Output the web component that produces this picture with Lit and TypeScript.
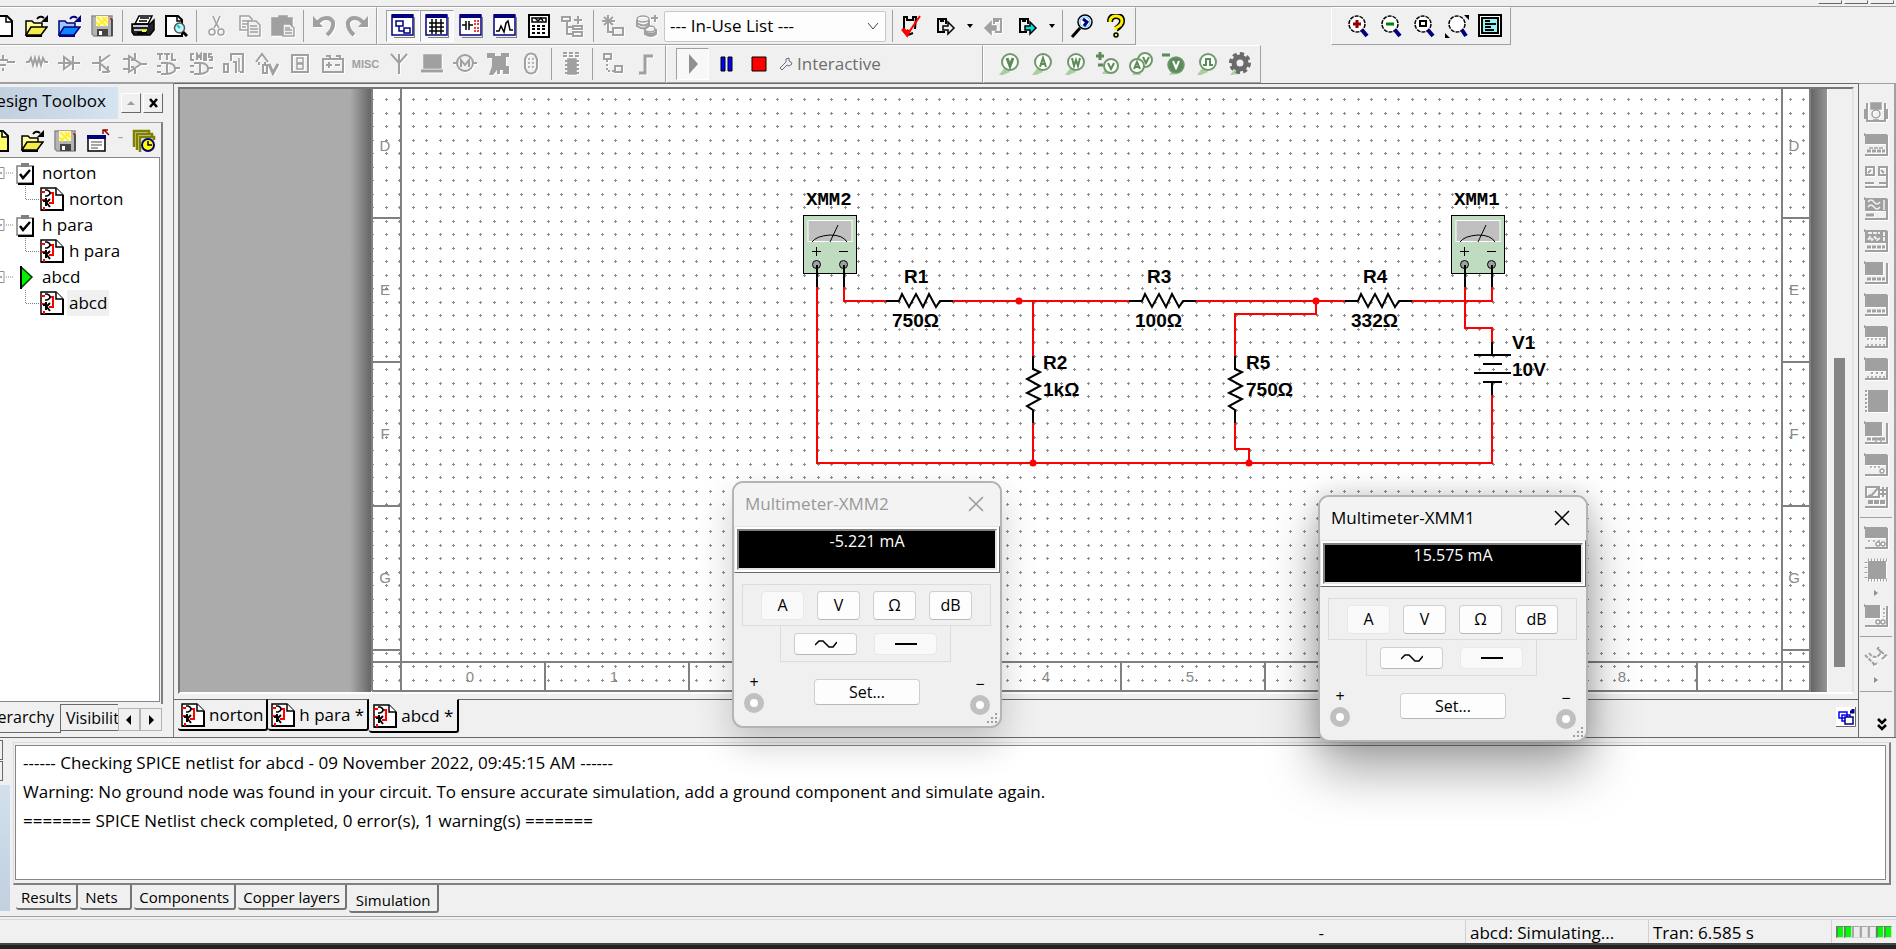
import { LitElement, html, css, svg, nothing, TemplateResult } from "lit";
import { customElement, property } from "lit/decorators.js";
import { classMap } from "lit/directives/class-map.js";

type Glyph = TemplateResult;
const glyph = (body: unknown, w = 24, h = 24) =>
  html`<svg width=${w} height=${h} viewBox="0 0 ${w} ${h}" aria-hidden="true">${body}</svg>`;

/* ---------- main toolbar glyphs ---------- */
const folder = (back: string, front: string, line: string) => svg`
  <path d="M13 5q3-4 7-1" stroke=${line} stroke-width="2"/><path d="M24 1v7h-7z" fill=${line} stroke="none"/>
  <path d="M2 21V7h6l2 2h8v4" fill=${back} stroke=${line}/><path d="M2 21l5-8h16l-6 8z" fill=${front} stroke=${line}/>
  <path d="M2 22h16" stroke=${line} stroke-width="2"/>`;
const G = {
  page: svg`<path d="M3 2h13l5 5v15H3z" fill="#fff" stroke="#000" stroke-width="2"/><path d="M15 2v6h6" stroke="#000"/>`,
  pageStar: svg`<path d="M2 2h14l5 5v15H2z" fill="#ffff6a" stroke="#000" stroke-width="2"/><path d="M15 2v6h5" fill="#fff" stroke="#000"/>`,
  open: folder("#ffff9a", "#f4ec4a", "#000"),
  openBlue: folder("#9cc8ff", "#0a84ff", "#00007e"),
  save: svg`<path d="M2 2h20v20H4l-2-2z" fill="#b4b4b4" stroke="#8c8c8c"/><path d="M6 2h12v10H6z" fill="#fffbd0" stroke="none"/><path d="M7 3l9 9M12 3l6 6M6 8l4 4M17 3l-9 9" stroke="#ffee2a" stroke-width="2"/><path d="M7 15h11v7H7z" fill="#444" stroke="none"/><path d="M9 17h3v4H9z" fill="#fff" stroke="none"/><path d="M22 5v17" stroke="#000" stroke-width="1"/><path d="M20 5h2" stroke="#f00"/>`,
  print: svg`<path d="M8 2h13l-4 8H4z" fill="#fff" stroke="#000"/><path d="M9 4h9M8 7h8" stroke="#000"/><path d="M1 10h18l4-4v10l-4 5H3l-2-3z" fill="#222" stroke="#000"/><path d="M2 12h15M3 16h13" stroke="#fff"/><path d="M6 19h10" stroke="#000" stroke-width="2"/><path d="M11 17h4" stroke="#ff0" stroke-width="2"/>`,
  preview: svg`<path d="M2 2h12l4 4v16H2z" fill="#fff" stroke="#000" stroke-width="2"/><path d="M13 2v5h5" stroke="#000"/><circle cx="15.500" cy="14" r="5" fill="#c4f4f8" stroke="#555"/><path d="M13 11l3 3" stroke="#0cc" stroke-width="2"/><path d="M19 18l4 4" stroke="#000" stroke-width="3"/>`,
  cut: svg`<path d="M8 2l3 7 3 5M15 2l-3 7-3 5"/><circle cx="7" cy="18" r="3"/><circle cx="16" cy="18" r="3"/>`,
  copy: svg`<path d="M2 2h9l3 3v11H2z"/><path d="M4 7h7M4 10h7M4 13h4"/><path d="M10 7h8l4 4v11H10z" fill="#f0f0f0"/><path d="M12 12h7M12 15h8M12 18h8"/>`,
  paste: svg`<path d="M1 4h7V2h8v2h5v17H1z" fill="currentColor"/><path d="M12 10h7l4 4v8H12z" fill="#f0f0f0"/><path d="M14 14h5M14 16h7M14 19h7"/>`,
  undo: svg`<path d="M1 2v11h10z" fill="currentColor" stroke="none"/><path d="M5 9l5-4q8-3 11 3 1 7-6 13" stroke-width="4"/>`,
  redo: svg`<path d="M23 2v11H13z" fill="currentColor" stroke="none"/><path d="M19 9l-5-4q-8-3-11 3-1 7 6 13" stroke-width="4"/>`,
  frame: (inner: unknown) => svg`<path d="M24 3v21H3" stroke="#808080" stroke-width="2"/><path d="M1 1h21v20H1z" fill="#fff" stroke="#00007e"/><path d="M1 2h21" stroke="#00007e" stroke-width="4"/>${inner}`,
  zoom: (inner: unknown) => svg`<circle cx="11" cy="10" r="8" fill="#fff" stroke="#000" stroke-width="1.500" stroke-dasharray="4 1"/><path d="M16 16l5 6" stroke="#00007e" stroke-width="4"/>${inner}`,
};
const calc = svg`<path d="M2 1h20v22H2z" fill="#fff" stroke="#000" stroke-width="2"/><path d="M5 4h14v4H5z" fill="#fff" stroke="#000"/><path d="M8 4l3 3 3-3 2 3" stroke="#000"/><path d="M5 12h14M5 15h14M5 19h14" stroke="#000" stroke-width="2" stroke-dasharray="3 2"/>`;
const hier = svg`<path d="M1 3h8v4H1zM12 12h9v3h-9zM12 18h9v4h-9z" stroke-width="2"/><path d="M6 8v12h6M6 13h6M13 6h8M17 2v8" stroke-width="2"/>`;
const star = svg`<path d="M1 7h13M7 1v12M3 3l9 8M12 3l-9 8M12 14h10v7H12zM7 13v5h4" stroke-width="2"/>`;
const dbs = svg`<ellipse cx="8" cy="5" rx="6" ry="3"/><path d="M2 6v6q7 5 12 0V6M2 9q7 5 12 0" stroke-width="2"/><ellipse cx="15" cy="15" rx="5" ry="3"/><path d="M10 15v5q6 4 11 0v-5M10 18q6 4 11 0M16 4h7M20 1v7" stroke-width="2"/>`;
const chipArrow = (fill: string, c: string) => svg`<path d="M4 4v14h7M4 5h3v2h2V5h3v5" stroke=${c} stroke-width="2"/><path d="M9 12h5V8l6 6-6 6v-4H9z" fill=${fill} stroke=${c}/>`;

interface Tool { name: string; icon?: Glyph; kind?: "sep" | "drop" | "list" | "gap"; dim?: boolean; on?: boolean; }
const sep: Tool = { name: "", kind: "sep" };
const drop = (name: string): Tool => ({ name, kind: "drop" });
const t = (name: string, body: unknown, o: Partial<Tool> = {}): Tool => ({ name, icon: glyph(body), ...o });
const d = (name: string, body: unknown) => t(name, body, { dim: true });

const fileTools: Tool[] = [
  t("New", G.page), t("Open", G.open), t("Open samples", G.openBlue), t("Save", G.save), sep,
  t("Print", G.print), t("Print preview", G.preview), sep,
  d("Cut", G.cut), d("Copy", G.copy), d("Paste", G.paste), sep, d("Undo", G.undo), d("Redo", G.redo),
];
const viewTools: Tool[] = [
  t("Design Toolbox", G.frame(svg`<path d="M5 7h7v5H5zM13 14h6v5h-6zM8 12v5h5" stroke="#00007e" fill="#fff"/>`), { on: true }),
  t("Spreadsheet View", G.frame(svg`<path d="M4 9h15M4 13h15M4 17h15M7 5v15M11 5v15M16 5v15" stroke="#000"/>`), { on: true }),
  t("SPICE Netlist", G.frame(svg`<path d="M3 11h4M7 7v9M10 7v9M10 11h4" stroke="#000"/><path d="M15 7h5M15 10h5M15 14h5M15 17h5" stroke="#e00000" stroke-dasharray="2 1"/>`)),
  t("Grapher", G.frame(svg`<path d="M3 17h3l2-5 3 6 2-9 2-2 2 9h3" stroke="#000"/>`)),
  t("Postprocessor", calc), d("Parent sheet", hier), sep, d("Component Wizard", star), d("Database Manager", dbs),
  { name: "In-Use List", kind: "list" }, sep,
  t("Electrical rules check", svg`<path d="M4 15V3h3v3h6V3h3l-1 12M8 21l5-2" stroke="#000" stroke-width="2"/><path d="M2 15l5 6L20 2" stroke="#f00" stroke-width="2"/><path d="M3 15l4 5 2-4" stroke="#f00" stroke-width="4"/>`),
  t("Transfer to Ultiboard", chipArrow("#f0f0f0", "#000")), drop("Transfer options"),
  d("Backward annotate", svg`<path d="M19 4v14h-6M19 5h-3v2h-2V5h-2v5" stroke-width="2"/><path d="M14 12H9V8l-6 6 6 6v-4h5z" fill="currentColor"/>`),
  t("Forward annotate", chipArrow("#00e0e0", "#000")), drop("Annotate options"), sep,
  t("Find examples", svg`<circle cx="15" cy="8" r="7" fill="#fff" stroke="#000"/><circle cx="15" cy="8" r="5" stroke="#8fd6ff"/><path d="M13 5l4 3-3 4" stroke="#00007e" stroke-width="3"/><path d="M10 14l-8 9" stroke="#000" stroke-width="3"/>`),
  t("Help", svg`<path d="M6 8q0-6 6-6t6 5q0 4-6 8" stroke="#000" stroke-width="6"/><path d="M6 8q0-6 6-6t6 5q0 4-6 7v2" stroke="#fff200" stroke-width="3"/><circle cx="12" cy="21" r="2" fill="#fff200" stroke="#000"/>`),
];
const zoomTools: Tool[] = [
  t("Zoom in", G.zoom(svg`<path d="M7 10h8M11 6v8" stroke="#900000" stroke-width="3"/>`)),
  t("Zoom out", G.zoom(svg`<path d="M7 10h8" stroke="#008000" stroke-width="3"/>`)),
  t("Zoom area", G.zoom(svg`<path d="M8 7h6v5H8z" stroke="#000" stroke-width="2"/>`)),
  t("Zoom sheet", svg`<circle cx="12" cy="10" r="8" fill="#fff" stroke="#000" stroke-dasharray="4 1"/><path d="M17 16l4 6" stroke="#00007e" stroke-width="4"/><path d="M19 1h5v5zM0 24v-5l5 5z" fill="#000" stroke="none"/>`),
  t("Full screen", svg`<path d="M1 1h22v21H1z" fill="#fff" stroke="#000" stroke-width="2"/><path d="M4 4h16v15H4z" fill="#8ff4f4" stroke="#000" stroke-width="2"/><path d="M7 7h5M7 10h11M7 13h6M7 16h9" stroke="#000" stroke-width="2"/>`),
];

/* ---------- component glyphs ---------- */
const gate = svg`<path d="M5 11h6v11H5M1 14h4M1 20h4M11 11q7 0 8 5t-8 6M19 16h5" stroke-width="2"/>`;
const partTools: Tool[] = [
  d("Source", svg`<path d="M0 10h8M16 10h8M6 8h11M9 13h6M12 3v5M12 16v3" stroke-width="2"/>`),
  d("Basic", svg`<path d="M2 10h3l2-4 2 7 2-7 2 7 2-7 2 7 2-7 2 4h3" stroke-width="2"/>`),
  d("Diode", svg`<path d="M1 11h22M7 5v12l8-6zM16 4v14" stroke-width="2"/>`),
  d("Transistor", svg`<path d="M2 11h8M10 4v15M10 10l10-7M11 12l9 8M18 14v6h-6" stroke-width="2"/>`),
  d("Analog", svg`<path d="M6 4v16l12-8zM0 7h6M0 17h6M18 12h6M12 1v6M12 17v5M8 8h3M8 15h3" stroke-width="2"/>`),
  d("TTL", svg`${gate}<path d="M1 2h6M4 2v6M8 2h6M11 2v6M16 1v7h4" stroke-width="2"/>`),
  d("CMOS", svg`${gate}<path d="M5 2H2v6h3M8 8V2l2 3 2-3v6M15 2h2v6h-2zM23 2h-3v3h3v3h-3" stroke-width="2"/>`),
  d("Misc digital", svg`<path d="M9 9V2h12v18h-3M2 12h4v8H2zM11 10h3v11" stroke-width="2"/><path d="M17 6v14"/>`),
  d("Mixed", svg`<path d="M1 10l6-8 6 8M4 10v3M10 10v3M8 13h4v8H8z" stroke-width="2"/><path d="M14 12l4 9 5-9" stroke-width="3"/>`),
  d("Indicator", svg`<path d="M4 3h16v17H4z" stroke-width="2"/><path d="M9 6h6v5H9zM9 12h6v5H9z"/>`),
  d("Power", svg`<path d="M2 7h20v13H2zM5 4h4v3M15 4h4v3M5 13h6M8 10v6M14 13h5" stroke-width="2"/>`),
  { name: "Miscellaneous", icon: html`<span class="misc">MISC</span>`, dim: true },
  d("RF", svg`<path d="M4 2l8 9 8-9M12 2v20" stroke-width="2"/>`),
  d("Advanced peripherals", svg`<path d="M4 3h17v13H4z" fill="currentColor"/><path d="M1 19h22" stroke-width="3"/>`),
  d("Electromechanical", svg`<path d="M0 11h24" stroke-width="2"/><circle cx="12" cy="11" r="8" fill="#f0f0f0" stroke-width="2"/><path d="M8 15V8l4 5 4-5v7" stroke-width="2"/>`),
  d("NI component", svg`<path d="M1 1h8v3h6V1h8v4h-3v9h3v8h-6v-4h-3v4h-3v-4l-4 5H3l3-9V6H1z" fill="currentColor" stroke="none"/>`),
  d("Connector", svg`<path d="M8 3q4-3 8 0l2 4v9l-2 4q-4 3-8 0l-2-4V7z" stroke-width="2"/><path d="M10 6v12M14 6v12" stroke-dasharray="2 2"/>`), sep,
  d("MCU", svg`<path d="M3 1h18M3 4h18" stroke-width="2" stroke-dasharray="4 2"/><path d="M8 7h8v15H8z" fill="currentColor"/><path d="M5 9h14M5 13h14M5 17h14M5 21h14" stroke-width="2"/>`), sep,
  d("Hierarchical block", svg`<path d="M3 2h7v5H3zM14 14h7v6h-7z" stroke-width="2"/><path d="M6 8v11h8" stroke-width="2" stroke-dasharray="2 2"/>`),
  d("Bus", svg`<path d="M5 21h6V4h8" stroke-width="3"/>`),
];
const probe = (inner: unknown) => svg`<path d="M2 23L9 14l4 6-7 3z" fill="#a9cf9f" stroke="none"/><circle cx="13" cy="10" r="8" fill="#fff" stroke="#6f9a6a" stroke-width="2"/>${inner}`;
const GV = "#5c8a58";
const probeTools: Tool[] = [
  t("Voltage probe", probe(svg`<path d="M10 6l3 8 3-8" stroke=${GV} stroke-width="3"/>`)),
  t("Current probe", probe(svg`<path d="M10 15l3-9 3 9M10 12h6" stroke=${GV} stroke-width="2"/>`)),
  t("Power probe", probe(svg`<path d="M9 6l2 8 2-6 2 6 2-8" stroke=${GV} stroke-width="2"/>`)),
  t("Differential voltage probe", svg`<path d="M6 22l4-6 4 6z" fill="#a9cf9f" stroke="none"/><path d="M0 4h8M4 0v8M2 13h5" stroke=${GV} stroke-width="3"/><circle cx="15" cy="14" r="7" fill="#fff" stroke="#6f9a6a" stroke-width="2"/><path d="M12 11l3 6 3-6" stroke=${GV} stroke-width="2"/>`),
  t("Voltage and current probe", svg`<path d="M3 23l5-5 4 5z" fill="#a9cf9f" stroke="none"/><circle cx="16" cy="8" r="7" fill="#fff" stroke="#6f9a6a" stroke-width="2"/><path d="M14 5l3 6 3-6" stroke=${GV} stroke-width="2"/><circle cx="8" cy="14" r="7" fill="#fff" stroke="#6f9a6a" stroke-width="2"/><path d="M5 17l3-7 3 7M6 15h5" stroke=${GV} stroke-width="2"/>`),
  t("Voltage reference probe", svg`<path d="M0 3h8" stroke=${GV} stroke-width="3"/><path d="M7 23l4-5 5 4z" fill="#a9cf9f" stroke="none"/><circle cx="14" cy="13" r="8" fill=${GV} stroke="#6f9a6a"/><path d="M11 9l3 7 3-7" stroke="#fff" stroke-width="2"/>`),
  t("Digital probe", probe(svg`<path d="M8 13h3V7h4v6h3" stroke=${GV} stroke-width="2"/>`)),
  t("Probe settings", svg`<path d="M2 23l5-6 5 5z" fill="#a9cf9f" stroke="none"/><circle cx="12" cy="11" r="6" fill="none" stroke="#6a6a6a" stroke-width="5"/><circle cx="12" cy="11" r="9" stroke="#6a6a6a" stroke-width="4" stroke-dasharray="4 3"/>`),
];

/* ---------- instrument strip ---------- */
const instr = (h: number, w: number, extra: unknown) =>
  svg`<path d="M1 1h${w}v${h}H1z" fill="currentColor" stroke="none"/><path d="M0 0v3M1 22h23M23 2v20" stroke-width="2"/>${extra}`;
const bits = (y: number) => svg`<path d="M3 ${y}h18" stroke-width="3" stroke-dasharray="4 1"/>`;
const instruments: Tool[] = [
  d("Multimeter", svg`<path d="M7 2h10v6H7z" fill="currentColor"/><path d="M3 2v18h18V2M1 8v10M23 8v10" stroke-width="2"/><circle cx="12" cy="13" r="4"/><path d="M9 19h6"/>`),
  d("Function generator", instr(10, 22, svg`<path d="M5 15h14" stroke-dasharray="4 1"/>${bits(18)}`)),
  d("Wattmeter", svg`<path d="M2 2h8v8H2zM15 2h8v8h-8zM4 8l3-3M17 5l3 3M1 18h9M15 18h8M1 22h23M23 2v20" stroke-width="2"/>`),
  d("Oscilloscope", instr(13, 22, svg`<path d="M4 5q3-4 6 0t6 0M4 10q3-4 6 0t6 0M20 3v10" stroke="#f0f0f0"/><path d="M2 18h8" stroke-width="3"/>`)),
  d("Four channel oscilloscope", instr(13, 22, svg`<path d="M4 4h12M4 11l2-3 2 3 3-3 2 3 3-2M20 3v10" stroke="#f0f0f0" stroke-width="2" stroke-dasharray="4 1"/>${bits(18)}`)),
  d("Bode plotter", instr(13, 18, bits(18))),
  d("Frequency counter", instr(13, 22, bits(18))),
  d("Word generator", instr(11, 22, svg`<path d="M3 14h18" stroke-dasharray="2 2"/><path d="M3 20h20" stroke-dasharray="2 2"/>`)),
  d("Logic converter", instr(13, 22, svg`<path d="M7 16h12" stroke-width="2" stroke-dasharray="2 3"/><path d="M3 20h20" stroke-dasharray="2 2"/>`)),
  d("Logic analyzer", svg`<path d="M4 1h20v22H4z" fill="currentColor" stroke="none"/><path d="M2 1v22" stroke-width="2" stroke-dasharray="2 2"/>`),
  d("IV analyzer", instr(14, 17, svg`${bits(18)}<path d="M12 16v5M17 16v5"/>`)),
  d("Distortion analyzer", instr(11, 22, svg`<path d="M6 14h12" stroke-dasharray="2 2"/><circle cx="18" cy="18" r="2"/>`)),
  d("Spectrum analyzer", svg`<path d="M2 2h13v10H2zM4 11l4-1 6-7M19 2v10M23 2v20M16 5h8M16 9h8M1 22h23" stroke-width="2"/><path d="M4 17h18" stroke-width="4" stroke-dasharray="5 1"/>`), sep,
  d("Network analyzer", instr(11, 22, svg`<path d="M4 15h14" stroke-dasharray="2 3"/><circle cx="14" cy="18" r="2"/><circle cx="19" cy="18" r="2"/>`)),
  d("Agilent instruments", svg`<path d="M4 3h18v18H4z" fill="currentColor" stroke="none"/><path d="M4 2h19M4 22h19" stroke-width="3" stroke-dasharray="1 2"/><path d="M2 4v17" stroke-width="3" stroke-dasharray="1 4"/>`),
  { name: "More instruments", kind: "drop" },
  d("Tektronix oscilloscope", instr(13, 15, svg`<path d="M20 4v9" stroke-dasharray="2 2"/><circle cx="14" cy="18" r="2"/><circle cx="19" cy="18" r="2"/>`)), sep,
  d("Current clamp", svg`<path d="M1 10l9 9M13 3l9 8M5 8q6 8 12 0M17 8l-3-6M9 20l5-2M18 14l5-4" stroke-width="2" stroke-dasharray="4 1"/>`),
  { name: "LabVIEW instruments", kind: "drop" }, sep,
];

const schematicDoc = glyph(svg`<path d="M1 1h15l7 7v15H1z" fill="#fff" stroke="#000" stroke-width="1.500"/><path d="M1 23h22V8" stroke="#000" stroke-width="2"/><path d="M16 1v7h7" fill="#fff" stroke="#000"/>
  <path d="M1 5h4M10 6h3v10h-4M1 13h4M4 20v3" stroke="#f00" stroke-width="2"/><path d="M5 3h2q3 1 3 3t-3 3H5" fill="#fff" stroke="#000"/><path d="M6 11v8M6 16l4-4M6 15l4 5M3 14h3" stroke="#000" stroke-width="2"/>`);
const clipboard = glyph(svg`<path d="M1 4h16v17H1z" fill="#fff" stroke="#808080"/><path d="M17 4v18H2" stroke="#000" stroke-width="2"/><path d="M5 1h8v4H5z" fill="#808080" stroke="none"/><path d="M4 12l3 4 7-8" stroke="#000" stroke-width="2.500"/>`, 18, 23);
const running = glyph(svg`<path d="M5 1v21l11-11z" fill="#00f000" stroke="#003c00"/><path d="M5 0v23" stroke="#000" stroke-width="2"/>`, 18, 23);

const renderTool = (x: Tool) => {
  if (x.kind === "sep") return html`<span class="sep"></span>`;
  if (x.kind === "drop") return html`<button class="drop" aria-label=${x.name}><i></i></button>`;
  if (x.kind === "list")
    return html`<label class="list"><select aria-label=${x.name}><option>--- In-Use List ---</option></select>${glyph(svg`<path d="M1 3l5 6 5-6" stroke="#444" stroke-width="1"/>`, 12, 12)}</label>`;
  return html`<button class=${classMap({ tool: true, dim: !!x.dim, on: !!x.on })} aria-label=${x.name}>${x.icon}</button>`;
};

const toolStyles = css`
  * { box-sizing: border-box; }
  svg { display: block; flex: none; fill: none; stroke: currentColor; stroke-width: 1.5; }
  button { font: inherit; color: inherit; background: none; border: 0; padding: 0; margin: 0; }
  .tool { width: 33px; height: 32px; flex: none; display: grid; place-items: center; }
  .dim { color: #a0a0a0; }
  .dim svg { filter: drop-shadow(1px 1px 0 #fff); }
  .on { background: #f8f8f8; border: 1px solid; border-color: #a0a0a0 #fff #fff #a0a0a0; }
  .sep { flex: none; width: 8px; height: 32px; background: linear-gradient(#a0a0a0, #a0a0a0) center / 1px 100% no-repeat; }
  .drop { width: 14px; height: 32px; display: grid; place-items: center; }
  .drop i { border: 3px solid transparent; border-top: 4px solid #000; border-bottom: 0; }
`;

@customElement("circuit-sheet")
export class CircuitSheet extends LitElement {
  static styles = css`
    :host { display: block; overflow: hidden; background: #ababab; }
    svg { display: block; width: 100%; height: 100%; }
    .rule { fill: none; stroke: #808080; stroke-width: 2; }
    .mark { font: 15px "Liberation Sans", Arial, sans-serif; fill: #8a8a8a; text-anchor: middle; }
    .wire { fill: none; stroke: #f00; stroke-width: 2; }
    .node { fill: #f00; }
    .part { fill: none; stroke: #000; stroke-width: 2; }
    .thin { fill: none; stroke: #000; stroke-width: 1; }
    .name { font: bold 19px "Liberation Sans", Arial, sans-serif; fill: #000; }
    .inst { font: bold 19px "Liberation Mono", "Courier New", monospace; fill: #000; }
  `;
  private resistor(x: number, y: number, turn = 0) {
    return svg`<path class="part" transform="translate(${x} ${y}) rotate(${turn})" d="M0 0h13l3-7 7 13 7-13 7 13 6-13 7 13 4-6h13"/>`;
  }
  private meter(x: number, name: string) {
    return svg`<g transform="translate(${x} 0)">
      <text class="inst" x="3" y="205">${name}</text>
      <rect x=".5" y="215.500" width="53" height="58" fill="#c0dcc0" stroke="#000"/>
      <rect x="5" y="220.500" width="44" height="21" fill="#c0c0c0" stroke="#fff"/>
      <path class="thin" d="M9 242q4-6 18-7 13 0 17 7M35 225l-8 17M9 251.500h9M13.500 247v9M36 251.500h9"/>
      <circle cx="13.500" cy="264.500" r="4" fill="#a0a0a4" stroke="#000"/><circle cx="40.500" cy="264.500" r="4" fill="#a0a0a4" stroke="#000"/>
      <path class="part" d="M14 265v22M41 265v22"/></g>`;
  }
  render() {
    const rows = ["D", "E", "F", "G"];
    const ticks = [218, 362, 506, 650];
    const labels: [string, number, number][] = [
      ["R1", 904, 283], ["750Ω", 892, 327], ["R3", 1147, 283], ["100Ω", 1135, 327], ["R4", 1363, 283], ["332Ω", 1351, 327],
      ["R2", 1043, 369], ["1kΩ", 1043, 396], ["R5", 1246, 369], ["750Ω", 1246, 396], ["V1", 1512, 349], ["10V", 1512, 376],
    ];
    return html`<svg role="img" aria-label="Circuit schematic abcd">
      <defs>
        <pattern id="dots" width="27" height="27" patternUnits="userSpaceOnUse">
          ${[8, 21].map((x) => [5, 18].map((y) => svg`<path d="M${x - 1} ${y + 0.5}h3M${x + 0.5} ${y - 1}v3" stroke="#8c8c8c"/>`))}
        </pattern>
        <linearGradient id="edge"><stop offset="0" stop-color="#ababab"/><stop offset="1" stop-color="#666"/></linearGradient>
        <linearGradient id="edgeR"><stop offset="0" stop-color="#666"/><stop offset="1" stop-color="#949494"/></linearGradient>
      </defs>
      <g transform="translate(-180 -89)">
        <rect x="350" y="80" width="21" height="612" fill="url(#edge)"/>
        <rect x="1811" y="80" width="16" height="612" fill="url(#edgeR)"/>
        <rect x="371" y="80" width="1440" height="612" fill="#fff"/>
        <rect x="372" y="95" width="1438" height="596" fill="url(#dots)"/>
        <path class="rule" d="M372 80v611M401 80v611M1782 80v611M1810 80v611M372 662h1438M372 691h1439"/>
        ${ticks.map((y) => svg`<path class="rule" d="M372 ${y}h29M1782 ${y}h29"/>`)}
        ${[545, 689, 833, 977, 1121, 1265, 1409, 1553, 1697].map((x) => svg`<path class="rule" d="M${x} 662v29"/>`)}
        ${rows.map((r, i) => svg`<text class="mark" x="385" y=${151 + i * 144}>${r}</text><text class="mark" x="1794" y=${151 + i * 144}>${r}</text>`)}
        ${[0, 1, 4, 5, 8].map((n) => svg`<text class="mark" x=${470 + n * 144} y="682">${n}</text>`)}
        <path class="wire" d="M817 287v176h675v-68M844 287v14h42M953 301h176M1196 301h149M1411 301h81v-14M1033 301v55M1033 422v41M1316 301v13h-81v42M1235 422v27h14v14M1465 287v41h27v14"/>
        ${[[1019, 301], [1033, 463], [1316, 301], [1249, 463]].map(([x, y]) => svg`<circle class="node" cx=${x} cy=${y} r="3.500"/>`)}
        ${this.resistor(886, 301)}${this.resistor(1129, 301)}${this.resistor(1345, 301)}
        ${this.resistor(1033, 356, 90)}${this.resistor(1235, 356, 90)}
        <path class="part" d="M1492 342v13M1474 355h37M1483 364h19M1474 373h37M1483 382h19M1492 382v13"/>
        ${this.meter(803, "XMM2")}${this.meter(1451, "XMM1")}
        ${labels.map(([s, x, y]) => svg`<text class="name" x=${x} y=${y}>${s}</text>`)}
      </g>
    </svg>`;
  }
}

@customElement("meter-window")
export class MeterWindow extends LitElement {
  @property() name = "";
  @property() value = "";
  @property({ type: Boolean }) active = false;
  static styles = css`
    * { box-sizing: border-box; }
    :host { display: block; width: 270px; border: 2px solid #b4b4b4; border-radius: 11px; background: #f0f0f0; overflow: hidden;
      font: 16px/20px "Open Sans", "Noto Sans", sans-serif; color: #000; box-shadow: 0 16px 36px rgba(0, 0, 0, 0.2); }
    :host([active]) { box-shadow: 0 28px 52px rgba(0, 0, 0, 0.36), 0 0 24px rgba(0, 0, 0, 0.16); }
    header { height: 43px; padding: 0 16px 2px 11px; display: flex; align-items: center; justify-content: space-between; background: #f3f3f3; color: #999; font-size: 17px; }
    :host([active]) header { color: #000; }
    button { font: inherit; color: inherit; padding: 0; border: 0; background: none; }
    svg { display: block; fill: none; stroke: currentColor; stroke-width: 1.5; }
    output { display: block; height: 47px; border: 1px solid; border-color: #e3e3e3 #696969 #696969 #e3e3e3; padding: 2px; background: #fff; }
    .lcd { display: block; height: 41px; border: 2px solid; border-color: #808080 #e3e3e3 #e3e3e3 #808080; background: #000; color: #fff; text-align: center; line-height: 21px; }
    .group { display: flex; border: 1px solid #dcdcdc; }
    .modes { width: 249px; height: 42px; margin: 11px 0 0 8px; padding-left: 18px; gap: 13px; align-items: center; }
    .signal { width: 171px; height: 37px; margin: -1px 0 0 46px; padding-left: 13px; gap: 17px; align-items: center; }
    .key { background: #fdfdfd; border: 1px solid #cfcfcf; border-bottom-color: #b8b8b8; border-radius: 4px; display: grid; place-items: center; }
    .key.down { background: #f9f9f9; border-color: #e8e8e8; }
    .modes .key { width: 43px; height: 29px; }
    .signal .key { width: 63px; height: 22px; }
    footer { display: flex; justify-content: space-between; padding: 11px 10px 0; height: 64px; }
    .set { width: 106px; height: 26px; margin-top: 6px; }
    .port { width: 20px; text-align: center; display: grid; gap: 2px; align-content: start; line-height: 18px; }
    .low { padding-top: 2px; }
    .ring { width: 20px; height: 20px; border-radius: 50%; border: 6px solid #c0c0c0; background: #fff; }
    .foot { position: relative; }
    .grip { position: absolute; right: 2px; bottom: 2px; color: #a0a0a0; }
  `;
  render() {
    return html`
      <header><span>${this.name}</span><button aria-label="Close"><svg width="16" height="16"><path d="M1 1l14 14M15 1L1 15"/></svg></button></header>
      <output><span class="lcd">${this.value}</span></output>
      <div class="group modes">${["A", "V", "Ω", "dB"].map((k, i) => html`<button class=${classMap({ key: true, down: i === 0 })}>${k}</button>`)}</div>
      <div class="group signal">
        <button class="key" aria-label="AC"><svg width="22" height="10"><path d="M0 6l4-4h4l6 6h4l4-5"/></svg></button>
        <button class="key down" aria-label="DC"><svg width="22" height="4"><path d="M0 2h22" stroke-width="2"/></svg></button>
      </div>
      <footer class="foot">
        <div class="port"><span>+</span><span class="ring"></span></div>
        <button class="key set">Set...</button>
        <div class="port low"><span>−</span><span class="ring"></span></div>
        <svg class="grip" width="11" height="11"><path d="M8 1h2M4 5h2M8 5h2M0 9h2M4 9h2M8 9h2" stroke-width="2"/></svg>
      </footer>`;
  }
}

@customElement("app-root")
export class AppRoot extends LitElement {
  static styles = [toolStyles, css`
    :host { display: flex; flex-direction: column; height: 100vh; overflow: hidden; background: #f0f0f0; color: #000;
      font: 17px/24px "Open Sans", "Noto Sans", sans-serif; }
    ul { list-style: none; margin: 0; padding: 0; }
    .strip { flex: none; height: 7px; border-bottom: 1px solid #a0a0a0; display: flex; justify-content: flex-end; gap: 2px; padding-right: 2px; }
    .strip button { width: 24px; height: 4px; border: 1px solid; border-color: transparent #696969 #696969 #fff; }
    .row { flex: none; display: flex; height: 38px; }
    .bar { display: flex; align-items: center; flex: none; border: 1px solid; border-color: #fff #a0a0a0 #a0a0a0 #fff; }
    .file, .parts { margin-left: -15px; padding-right: 3px; }
    .view { padding: 0 2px 0 8px; }
    .view .tool { width: 34px; }
    .view .sep { width: 6px; }
    .zoom { margin-left: 195px; padding: 0 4px 0 9px; }
    .run { width: 317px; padding-left: 9px; color: #6d6d6d; }
    .probes { padding: 0 4px 0 8px; }
    .interactive { display: flex; align-items: center; gap: 4px; padding-left: 4px; }
    .misc { font: bold 11px "Liberation Sans", Arial, sans-serif; }
    .list { position: relative; display: flex; margin-right: 3px; }
    .list select { appearance: none; width: 222px; height: 31px; border: 1px solid #c8c8c8; border-radius: 2px; background: #fdfdfd; font: inherit; padding: 0 5px; color: #000; }
    .list svg { position: absolute; right: 7px; top: 9px; }

    .work { flex: 1; min-height: 0; display: grid; grid-template-columns: 174px minmax(0, 1fr) 37px; }
    .side { border-top: 1px solid #a0a0a0; border-right: 1px solid #808080; display: flex; flex-direction: column; padding: 3px 10px 4px 0; min-height: 0; }
    .head { display: flex; height: 32px; align-items: center; gap: 2px; margin-bottom: 3px; }
    .title { flex: 1; height: 32px; margin-right: 1px; overflow: hidden; display: flex; justify-content: flex-end; align-items: center; padding-right: 12px; padding-bottom: 4px; white-space: nowrap; background: linear-gradient(90deg, #c1cfde, #d6e3f1); }
    .mini { width: 20px; height: 20px; display: grid; place-items: center; border: 1px solid; border-color: #fff #696969 #696969 #fff; }
    .box { flex: 1; min-height: 0; display: flex; flex-direction: column; border-top: 1px solid #a0a0a0; border-right: 2px solid #808080; padding-right: 1px; }
    .boxbar { display: flex; height: 34px; flex: none; margin-left: -18px; align-items: center; padding-top: 2px; }
    .dash { width: 13px; text-align: center; color: #a0a0a0; line-height: 10px; padding-bottom: 10px; }
    .tree { flex: 1; background: #fff; border: 1px solid #828790; border-left: 0; padding-top: 2px; margin-bottom: 2px; }
    .node { display: flex; align-items: center; height: 26px; white-space: nowrap; }
    .root > span { padding-left: 8px; }
    .leaf > span { padding: 1px 2px; margin-left: 3px; }
    .leaf > .sel { background: #f0f0f0; }
    .sidetabs { flex: none; height: 29px; display: flex; overflow: hidden; font-size: 16px; }
    .hier { width: 61px; display: flex; justify-content: flex-end; border-right: 1px solid #696969; border-bottom: 1px solid #696969; padding-right: 6px; line-height: 26px; }
    .vis { width: 57px; padding-left: 5px; height: 27px; overflow: hidden; text-align: left; line-height: 22px; border-top: 1px solid #696969; border-bottom: 1px solid #696969; }
    .sidetabs .arrow { width: 22px; height: 23px; margin-top: 4px; border: 1px solid #b4b4b4; display: grid; place-items: center; }

    .desk { position: relative; border-top: 1px solid #696969; padding: 3px 0 0 4px; display: flex; flex-direction: column; min-width: 0; min-height: 0; border-right: 1px solid #696969; }
    .pane { flex: 1; min-height: 0; display: flex; margin-right: 4px; border: 2px solid; border-color: #757575 #e3e3e3 #fff #757575; }
    .pane circuit-sheet { flex: 1; min-width: 0; }
    .scroll { flex: none; width: 25px; background: #f0f0f0; padding: 269px 7px 25px 6px; border-left: 1px solid #fff; }
    .thumb { height: 100%; background: #858585; }
    .doctabs { flex: none; height: 43px; padding-top: 5px; margin-left: -4px; display: flex; }
    .doctab { height: 32px; display: flex; align-items: center; gap: 4px; border-top: 1px solid #696969; border-right: 2px solid #000; border-bottom: 2px solid #000; border-radius: 0 0 3px 3px; padding: 1px 3px 0; white-space: nowrap; flex: none; }
    .doctab.current { height: 34px; border-top-color: transparent; padding: 0 4px; }
    .lead { width: 4px; border-top: 1px solid #696969; }
    .rest { flex: 1; border-top: 1px solid #696969; display: flex; justify-content: flex-end; padding: 7px 2px 0 0; }
    .cascade { width: 20px; height: 20px; }
    .m2, .m1 { position: absolute; z-index: 3; }
    .m2 { left: 558px; top: 397px; }
    .m1 { left: 1144px; top: 411px; }

    .rail { border-top: 1px solid #a0a0a0; border-right: 2px solid #a0a0a0; display: flex; flex-direction: column; align-items: center; padding: 13px 1px 0 0; }
    .rail .tool { height: 32px; }
    .rail .sep { width: 32px; height: 9px; background: linear-gradient(#a0a0a0, #a0a0a0) center / 100% 1px no-repeat; }
    .rail .drop { height: 14px; }
    .rail .drop i { border: 3px solid transparent; border-left: 4px solid #909090; border-right: 0; }
    .more { margin: 22px 0 0 12px; }

    .out { flex: none; height: 179px; border-top: 1px solid #696969; display: flex; border-bottom: 0; }
    .grab { width: 13px; display: flex; flex-direction: column; gap: 1px; padding-top: 2px; }
    .grab i { width: 3px; height: 20px; border: 1px solid #696969; border-left: 0; }
    .grab b { flex: 1; width: 10px; margin: 3px 0 5px; background: linear-gradient(#d3e0ee, #c1cfde); }
    .outmain { flex: 1; min-width: 0; display: flex; flex-direction: column; padding: 4px 0 0; margin-right: 5px; }
    .frame { border: 1px solid #dcdcdc; border-right: 2px solid #808080; border-bottom: 2px solid #808080; padding: 2px 3px 3px 1px; height: 143px; }
    .log { height: 100%; border: 1px solid #828790; background: #fff; padding: 2px 7px; line-height: 29px; }
    .log p { margin: 0; white-space: nowrap; }
    .outtabs { display: flex; padding-left: 3px; gap: 2px; font-size: 15px; }
    .outtab { height: 25px; min-width: 52px; padding: 0 5px; text-align: left; border-right: 2px solid #757575; border-bottom: 2px solid #757575; border-radius: 0 0 3px 3px; white-space: nowrap; }
    .outtab.current { height: 28px; padding: 3px 7px 0; background: #f0f0f0; }
    .status { flex: none; height: 27px; border-top: 1px solid #a0a0a0; display: flex; font-size: 17px; box-shadow: inset 0 2px #f0f0f0, inset 0 3px #d8d8d8; }
    .status span { padding: 2px 4px 0; border-left: 1px solid #d0d0d0; margin-top: 3px; white-space: nowrap; line-height: 22px; }
    .status .idle { flex: 1; border: 0; text-align: right; padding-right: 141px; }
    .status .sim { width: 183px; }
    .status .leds { width: 65px; display: flex; padding: 6px 4px 5px; }
    .leds i { flex: 1; border: 1px solid #d6d6d6; border-left: 2px solid #a8a8a8; border-top-color: #a8a8a8; background: #ececec; }
    .leds .lit { background: #0f0; border-left-color: #5a8a5a; border-top-color: #5a8a5a; }
    .base { flex: none; height: 6px; background: #222; border-top: 2px solid #444; }
  `];

  private outputTabs = ["Results", "Nets", "Components", "Copper layers", "Simulation"];
  private docs = ["norton", "h para *", "abcd *"];
  private designs = [
    { name: "norton", icon: clipboard }, { name: "h para", icon: clipboard }, { name: "abcd", icon: running, sel: true },
  ];

  render() {
    return html`
      <div class="strip"><button aria-label="Minimize"></button><button aria-label="Restore"></button><button aria-label="Close"></button></div>
      <div class="row">
        <div class="bar file">${fileTools.map(renderTool)}</div>
        <div class="bar view">${viewTools.map(renderTool)}</div>
        <div class="bar zoom">${zoomTools.map(renderTool)}</div>
      </div>
      <div class="row">
        <div class="bar parts">${partTools.map(renderTool)}</div>
        <div class="bar run">
          <button class="tool on" aria-label="Run">${glyph(svg`<path d="M8 2v20l9-10z" fill="#909090" stroke="none"/>`)}</button>
          <button class="tool" aria-label="Pause">${glyph(svg`<path d="M7 5h4v14H7zM14 5h4v14h-4z" fill="#00f" stroke="#000" stroke-width="1"/>`)}</button>
          <button class="tool" aria-label="Stop">${glyph(svg`<path d="M5 5h14v14H5z" fill="#f00" stroke="#000" stroke-width="1"/>`)}</button>
          <button class="interactive">${glyph(svg`<path d="M1 11l6-6V2l3-1v3l2 1 1 2-3 2-2-1-5 5z" stroke-width="1"/>`, 14, 14)}Interactive</button>
        </div>
        <div class="bar probes">${probeTools.map(renderTool)}</div>
      </div>
      <div class="work">
        <aside class="side">
          <div class="head">
            <div class="title">Design Toolbox</div>
            <button class="mini" aria-label="Pin">${glyph(svg`<path d="M2 7h8L6 3z" fill="#a0a0a0" stroke="none"/>`, 12, 10)}</button>
            <button class="mini" aria-label="Close">${glyph(svg`<path d="M2 1l7 8M9 1L2 9" stroke="#000" stroke-width="2.500"/>`, 11, 10)}</button>
          </div>
          <div class="box">
            <div class="boxbar">
              ${[t("New design", G.pageStar), t("Open design", G.open), t("Save design", G.save),
                t("Rename", svg`<path d="M2 8h17v14H2z" fill="#fff" stroke="#000"/><path d="M1 8h19" stroke="#00007e" stroke-width="4"/><path d="M5 13h11M5 16h11M5 19h7" stroke="#888"/><path d="M23 6l-5-5M17 5V1h5" stroke="#900000"/>`)].map(renderTool)}
              <span class="dash">-</span>
              ${renderTool(t("History", svg`<path d="M2 18V2h15v2M5 21V5h15v3M8 23V8h14v3" stroke="#808000" stroke-width="2.500"/><circle cx="16" cy="16" r="6" fill="#ff0" stroke="#00007e" stroke-width="2"/><path d="M16 12v4h4" stroke="#000"/>`))}
            </div>
            <ul class="tree">
              ${this.designs.map((x) => html`
                <li>
                  <div class="node root">${glyph(svg`<path d="M-6 6.500h10v11H-6z" fill="#fff" stroke="#909090" stroke-width="1"/><path d="M-4 12h6" stroke="#3050a0" stroke-width="1"/><path d="M6 12h8" stroke="#808080" stroke-width="1" stroke-dasharray="1 1"/>`, 16, 24)}${x.icon}<span>${x.name}</span></div>
                  <div class="node leaf">${glyph(svg`<path d="M25.500 0v13.500H40" stroke="#808080" stroke-width="1" stroke-dasharray="1 1"/>`, 40, 26)}${schematicDoc}<span class=${x.sel ? "sel" : ""}>${x.name}</span></div>
                </li>`)}
            </ul>
          </div>
          <div class="sidetabs">
            <button class="hier">Hierarchy</button><button class="vis">Visibility</button>
            <button class="arrow" aria-label="Previous tab">${glyph(svg`<path d="M7 0v10L2 5z" fill="#000" stroke="none"/>`, 10, 10)}</button>
            <button class="arrow" aria-label="Next tab">${glyph(svg`<path d="M3 0v10l5-5z" fill="#000" stroke="none"/>`, 10, 10)}</button>
          </div>
        </aside>
        <main class="desk">
          <div class="pane">
            <circuit-sheet></circuit-sheet>
            <div class="scroll"><div class="thumb"></div></div>
          </div>
          <div class="doctabs">
            <span class="lead"></span>
            ${this.docs.map((x, i) => html`<button class=${classMap({ doctab: true, current: i === 2 })}>${schematicDoc}<span>${x}</span></button>`)}
            <div class="rest"><button class="cascade" aria-label="Window list">${glyph(svg`<path d="M0 0h20v20H0z" fill="#fff" stroke="none"/><path d="M19.500 0v19.500H0" stroke="#696969" stroke-width="1"/><path d="M3 5h8v6H3zM6 8h8v6H6z" fill="#fff" stroke="#00f"/><path d="M9 10h8v7H9z" fill="#fff" stroke="#00007e"/><path d="M14 5h3V2" stroke="#00007e" stroke-width="3"/>`, 20, 20)}</button></div>
          </div>
          <meter-window class="m2" name="Multimeter-XMM2" value="-5.221 mA"></meter-window>
          <meter-window class="m1" name="Multimeter-XMM1" value="15.575 mA" active></meter-window>
        </main>
        <nav class="rail">${instruments.map(renderTool)}
          <button class="more" aria-label="More tools">${glyph(svg`<path d="M5 1l4 4 4-4M5 7l4 4 4-4" stroke="#000" stroke-width="2.500"/>`, 18, 14)}</button>
        </nav>
      </div>
      <section class="out">
        <div class="grab"><i></i><i></i><b></b></div>
        <div class="outmain">
          <div class="frame"><div class="log">
            <p>------ Checking SPICE netlist for abcd - 09 November 2022, 09:45:15 AM ------</p>
            <p>Warning: No ground node was found in your circuit. To ensure accurate simulation, add a ground component and simulate again.</p>
            <p>======= SPICE Netlist check completed, 0 error(s), 1 warning(s) =======</p>
          </div></div>
          <div class="outtabs">${this.outputTabs.map((x) => html`<button class=${classMap({ outtab: true, current: x === "Simulation" })}>${x}</button>`)}</div>
        </div>
      </section>
      <footer class="status">
        <span class="idle">-</span><span class="sim">abcd: Simulating...</span><span class="sim">Tran: 6.585 s</span>
        <span class="leds">${[1, 1, 0, 0, 0, 1, 1].map((x) => html`<i class=${x ? "lit" : nothing}></i>`)}</span>
      </footer>
      <div class="base"></div>`;
  }
}
